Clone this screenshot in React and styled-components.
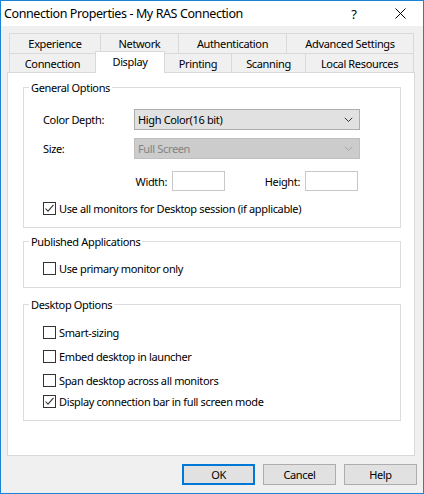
import React from "react";
import styled, { createGlobalStyle } from "styled-components";

const Global = createGlobalStyle`
  html, body { margin: 0; padding: 0; background: #ffffff; }
  body {
    font-family: "Noto Sans", "Open Sans", sans-serif;
    font-size: 11px;
    letter-spacing: -0.35px;
    color: #000;
  }
  * { box-sizing: border-box; }
`;

const Window = styled.div`
  width: 424px;
  height: 494px;
  border: 1px solid #1883d7;
  display: flex;
  flex-direction: column;
  background: #f0f0f0;
`;

const TitleBar = styled.div`
  height: 25px;
  background: #ffffff;
  display: flex;
  align-items: center;
`;

const Title = styled.div`
  flex: 1;
  padding-left: 3px;
  font-size: 12.5px;
  letter-spacing: -0.4px;
  line-height: 25px;
  color: #000;
`;

const CaptionButton = styled.div`
  width: 46px;
  height: 25px;
  display: flex;
  align-items: center;
  justify-content: center;
  font-size: 13px;
  color: #000;
`;

const Body = styled.div`
  flex: 1;
  display: flex;
  flex-direction: column;
  padding: 7px 8px 0 6px;
`;

const Tabs = styled.div`
  display: flex;
  flex-direction: column;
  padding-left: 2px;
`;

const TabRow = styled.div`
  display: flex;
  height: ${(p) => p.$h}px;
`;

const Tab = styled.div`
  width: ${(p) => p.$w}px;
  height: ${(p) => (p.$active ? p.$h + 3 : p.$h)}px;
  margin-top: ${(p) => (p.$active ? -2 : 0)}px;
  margin-right: -1px;
  border: 1px solid #d9d9d9;
  border-bottom: none;
  background: ${(p) => (p.$active ? "#ffffff" : "#f0f0f0")};
  position: relative;
  z-index: ${(p) => (p.$active ? 2 : 0)};
  display: flex;
  justify-content: center;
  padding-top: 2px;
  line-height: 16px;
  white-space: nowrap;
`;

const Panel = styled.div`
  flex: 1;
  background: #ffffff;
  border: 1px solid #d9d9d9;
  padding: 14px 13px 0 15px;
  display: flex;
  flex-direction: column;
`;

const Group = styled.div`
  border: 1px solid #dcdcdc;
  margin-top: ${(p) => p.$mt || 0}px;
`;

const Legend = styled.div`
  width: fit-content;
  margin: -8px 0 0 5px;
  padding: 0 2px;
  background: #ffffff;
  line-height: 16px;
`;

const GroupBody = styled.div`
  padding: ${(p) => p.$pt}px 0 11px 19px;
  display: flex;
  flex-direction: column;
`;

const FieldRow = styled.div`
  display: flex;
  align-items: center;
  height: ${(p) => p.$h || 21}px;
  margin-top: ${(p) => p.$mt || 0}px;
`;

const FieldLabel = styled.div`
  width: 91px;
  color: #000;
`;

const Select = styled.div`
  width: 226px;
  height: 21px;
  border: 1px solid ${(p) => (p.$disabled ? "#bfbfbf" : "#adadad")};
  background: ${(p) => (p.$disabled ? "#cccccc" : "#e1e1e1")};
  color: ${(p) => (p.$disabled ? "#838383" : "#000")};
  display: flex;
  align-items: center;
  justify-content: space-between;
  padding: 0 6px 0 3px;
  line-height: 19px;
`;

const DimLabel = styled.div`
  width: ${(p) => p.$w}px;
  text-align: right;
`;

const TextBox = styled.div`
  width: 53px;
  height: 20px;
  margin-left: 5px;
  border: 1px solid #c8c8c8;
  background: #ffffff;
`;

const CheckRow = styled.label`
  display: flex;
  align-items: center;
  height: 16px;
  margin-top: ${(p) => p.$mt || 0}px;
  gap: 3px;
`;

const Box = styled.span`
  width: 13px;
  height: 13px;
  border: 1px solid #333333;
  background: #ffffff;
  display: flex;
  flex-shrink: 0;
`;

const ButtonBar = styled.div`
  display: flex;
  justify-content: flex-end;
  gap: 8px;
  margin: 8px -2px 8px 0;
`;

const Button = styled.div`
  width: 73px;
  height: 21px;
  border: ${(p) => (p.$default ? "2px solid #0078d7" : "1px solid #adadad")};
  background: #e1e1e1;
  display: flex;
  align-items: center;
  justify-content: center;
  line-height: 17px;
`;

const Chevron = ({ color }) => (
  <svg width="9" height="6" viewBox="0 0 9 6">
    <path d="M0.8 0.8 L4.5 4.5 L8.2 0.8" fill="none" stroke={color} strokeWidth="1" />
  </svg>
);

const Checkbox = ({ checked, label, mt }) => (
  <CheckRow $mt={mt}>
    <Box>
      {checked && (
        <svg width="11" height="11" viewBox="0 0 11 11">
          <path d="M1.5 5.5 L4 8.2 L9.5 1.8" fill="none" stroke="#333" strokeWidth="1.1" />
        </svg>
      )}
    </Box>
    <span>{label}</span>
  </CheckRow>
);

const topTabs = [
  ["Experience", 92],
  ["Network", 79],
  ["Authentication", 109],
  ["Advanced Settings", 128],
];
const bottomTabs = [
  ["Connection", 87],
  ["Display", 70, true],
  ["Printing", 68],
  ["Scanning", 75],
  ["Local Resources", 109],
];

export default function App() {
  return (
    <>
      <Global />
      <Window>
        <TitleBar>
          <Title>Connection Properties - My RAS Connection</Title>
          <CaptionButton>?</CaptionButton>
          <CaptionButton>
            <svg width="11" height="11" viewBox="0 0 11 11">
              <path d="M0.5 0.5 L10.5 10.5 M10.5 0.5 L0.5 10.5" stroke="#000" strokeWidth="1" />
            </svg>
          </CaptionButton>
        </TitleBar>
        <Body>
          <Tabs>
            <TabRow $h={20}>
              {topTabs.map(([t, w]) => (
                <Tab key={t} $w={w} $h={20}>
                  {t}
                </Tab>
              ))}
            </TabRow>
            <TabRow $h={19}>
              {bottomTabs.map(([t, w, a]) => (
                <Tab key={t} $w={w} $h={19} $active={a}>
                  {t}
                </Tab>
              ))}
            </TabRow>
          </Tabs>
          <Panel>
            <Group>
              <Legend>General Options</Legend>
              <GroupBody $pt={13}>
                <FieldRow>
                  <FieldLabel>Color Depth:</FieldLabel>
                  <Select>
                    <span>High Color(16 bit)</span>
                    <Chevron color="#333" />
                  </Select>
                </FieldRow>
                <FieldRow $mt={8}>
                  <FieldLabel>Size:</FieldLabel>
                  <Select $disabled>
                    <span>Full Screen</span>
                    <Chevron color="#a6a6a6" />
                  </Select>
                </FieldRow>
                <FieldRow $mt={12} $h={20}>
                  <DimLabel $w={124}>Width:</DimLabel>
                  <TextBox />
                  <DimLabel $w={75}>Height:</DimLabel>
                  <TextBox />
                </FieldRow>
                <Checkbox mt={9} checked label="Use all monitors for Desktop session (if applicable)" />
              </GroupBody>
            </Group>
            <Group $mt={13}>
              <Legend>Published Applications</Legend>
              <GroupBody $pt={10}>
                <Checkbox label="Use primary monitor only" />
              </GroupBody>
            </Group>
            <Group $mt={16}>
              <Legend>Desktop Options</Legend>
              <GroupBody $pt={11}>
                <Checkbox label="Smart-sizing" />
                <Checkbox mt={8} label="Embed desktop in launcher" />
                <Checkbox mt={8} label="Span desktop across all monitors" />
                <Checkbox mt={5} checked label="Display connection bar in full screen mode" />
              </GroupBody>
            </Group>
          </Panel>
          <ButtonBar>
            <Button $default>OK</Button>
            <Button>Cancel</Button>
            <Button>Help</Button>
          </ButtonBar>
        </Body>
      </Window>
    </>
  );
}
